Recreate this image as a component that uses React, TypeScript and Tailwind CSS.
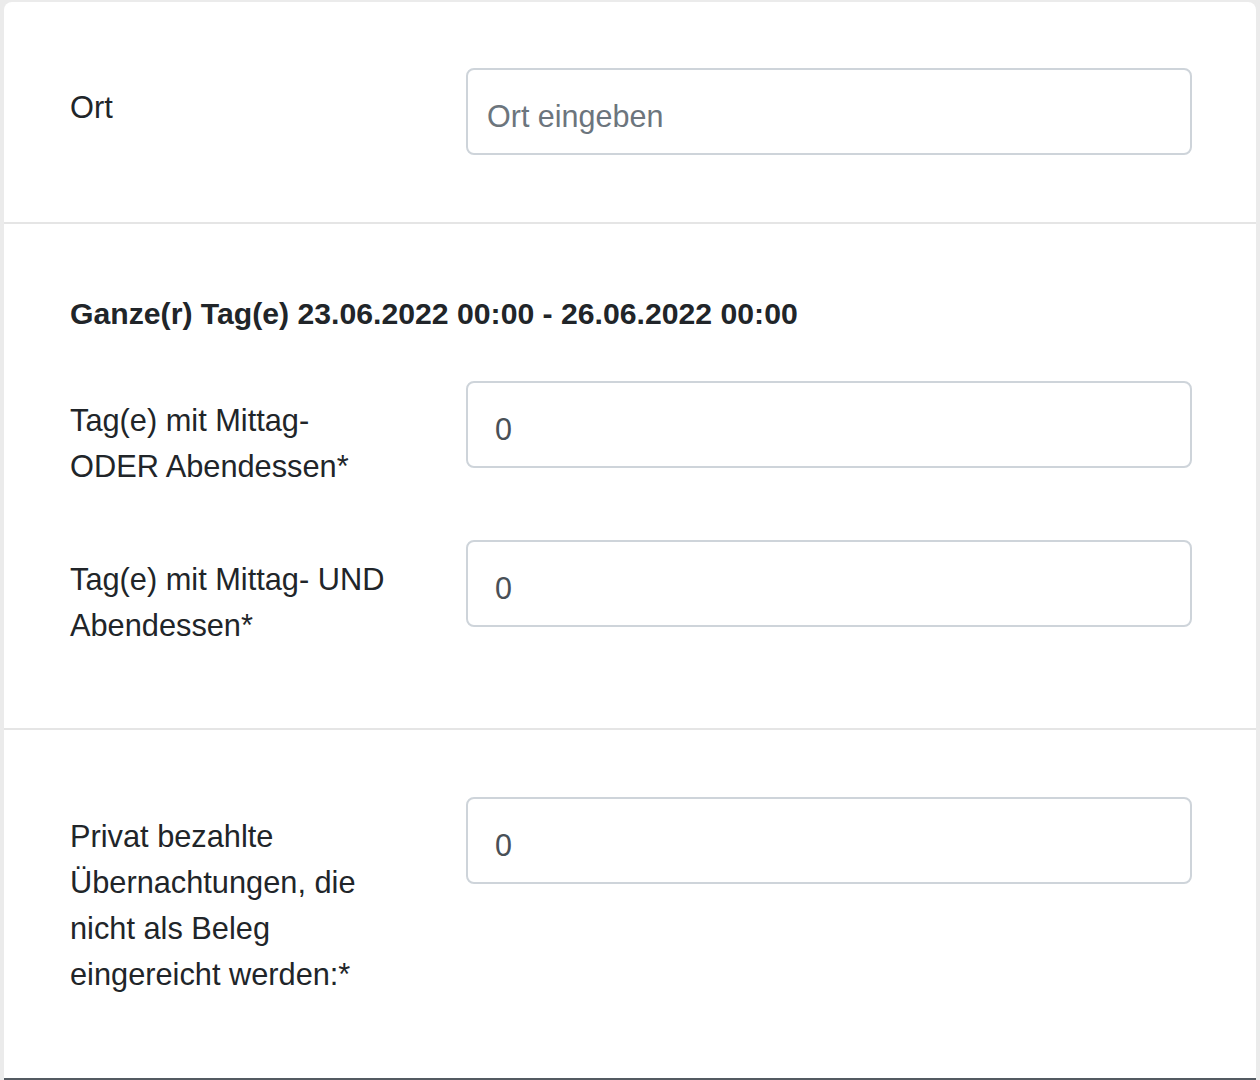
import React from "react";

type FieldProps = {
  label: string;
  value?: string;
  placeholder?: string;
};

function Field({ label, value, placeholder }: FieldProps) {
  const isText = value === undefined;
  return (
    <div className="flex items-start">
      <label className="w-[326px] shrink-0 mr-[70px] pt-[17px] pb-[15px] text-[30.75px] leading-[46px] text-[#212529]">
        {label}
      </label>
      <input
        type="text"
        readOnly={!isText}
        defaultValue={value}
        placeholder={placeholder}
        className={`flex-1 min-w-0 h-[87px] box-border border-2 border-[#ced4da] rounded-[8px] bg-white pt-[9px] pb-0 text-[30.5px] text-[#495057] placeholder:text-[#6c757d] outline-none ${
          isText ? "pl-[19px]" : "pl-[27px]"
        }`}
      />
    </div>
  );
}

export default function App() {
  return (
    <div
      className="min-h-screen bg-[#ebebeb] pt-[2px] px-[4px]"
      style={{ fontFamily: '"Liberation Sans", Arial, sans-serif' }}
    >
      <div className="bg-white rounded-t-[8px] overflow-hidden">
        {/* Ort */}
        <section className="pl-[66px] pr-[64px] pt-[66px] pb-[67px]">
          <Field label="Ort" placeholder="Ort eingeben" />
        </section>

        {/* Verpflegung */}
        <section className="border-t-2 border-[#e5e5e5] pl-[66px] pr-[64px] pt-[67px] pb-[64px]">
          <h3 className="text-[30.2px] leading-[46px] font-bold text-[#212529] mb-[44px]">
            Ganze(r) Tag(e) 23.06.2022 00:00 - 26.06.2022 00:00
          </h3>
          <div className="flex flex-col gap-[35px]">
            <Field label="Tag(e) mit Mittag- ODER Abendessen*" value="0" />
            <Field label="Tag(e) mit Mittag- UND Abendessen*" value="0" />
          </div>
        </section>

        {/* Übernachtungen */}
        <section className="border-t-2 border-[#e5e5e5] pl-[66px] pr-[64px] pt-[67px] pb-[65px]">
          <Field
            label="Privat bezahlte Übernachtungen, die nicht als Beleg eingereicht werden:*"
            value="0"
          />
        </section>

        <div className="h-[40px] bg-[#545b62]" />
      </div>
    </div>
  );
}
